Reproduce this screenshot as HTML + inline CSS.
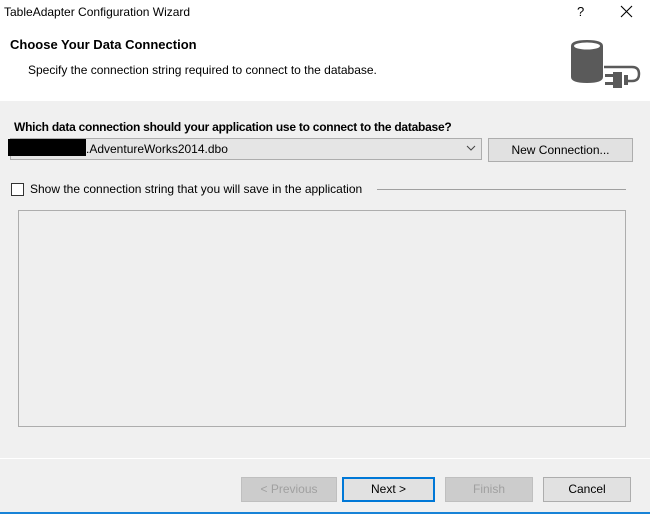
<!DOCTYPE html>
<html><head><style>
*{margin:0;padding:0;box-sizing:border-box}
body{width:650px;height:514px;background:#f0f0f0;font-family:"Liberation Sans",sans-serif;font-size:12px;color:#000;position:relative;overflow:hidden}
.a{position:absolute;white-space:nowrap}
.btn{position:absolute;border:1px solid #adadad;background:#e1e1e1;text-align:center;line-height:23px;font-size:12px}
.dis{color:#a0a0a0;background:#cccccc;border-color:#bfbfbf}
</style></head><body>
<div class="a" style="left:0;top:0;width:650px;height:101px;background:#fff"></div>
<div class="a" style="left:4px;top:5px;font-size:12px">TableAdapter Configuration Wizard</div>
<div class="a" style="left:577px;top:4px;font-size:13px">?</div>
<svg class="a" style="left:620px;top:5px" width="13" height="13"><path d="M1 1L12 12M12 1L1 12" stroke="#000" stroke-width="1.1"/></svg>
<div class="a" style="left:10px;top:37px;font-size:13px;font-weight:bold">Choose Your Data Connection</div>
<div class="a" style="left:28px;top:63px">Specify the connection string required to connect to the database.</div>
<svg class="a" style="left:568px;top:38px" width="80" height="54">
<path d="M3 8Q3 2 19 2Q35 2 35 8V39Q35 45 19 45Q3 45 3 39Z" fill="#5a5a5a"/>
<ellipse cx="19" cy="8" rx="13" ry="3.5" fill="#fff"/>
<path d="M36 29H64Q71 29 71 36Q71 43 64 43H60" fill="none" stroke="#5a5a5a" stroke-width="2.5"/>
<rect x="45" y="34" width="9" height="16" fill="#5a5a5a"/>
<rect x="37" y="36" width="8" height="3" fill="#5a5a5a"/><rect x="37" y="44" width="8" height="3" fill="#5a5a5a"/>
<rect x="56" y="37" width="4" height="10" fill="#5a5a5a"/>
</svg>
<div class="a" style="left:14px;top:120px;font-weight:bold;letter-spacing:-0.25px">Which data connection should your application use to connect to the database?</div>
<div class="a" style="left:10px;top:138px;width:472px;height:22px;border:1px solid #adadad;background:#e5e5e5"></div>
<div class="a" style="left:8px;top:139px;width:78px;height:17px;background:#000"></div>
<div class="a" style="left:86px;top:142px">.AdventureWorks2014.dbo</div>
<svg class="a" style="left:466px;top:145px" width="10" height="6"><path d="M1 1L5 5L9 1" fill="none" stroke="#444"/></svg>
<div class="btn" style="left:488px;top:138px;width:145px;height:24px">New Connection...</div>
<div class="a" style="left:11px;top:183px;width:13px;height:13px;border:1px solid #333;background:#fff"></div>
<div class="a" style="left:30px;top:182px">Show the connection string that you will save in the application</div>
<div class="a" style="left:377px;top:189px;width:249px;height:1px;background:#a0a0a0"></div>
<div class="a" style="left:18px;top:210px;width:608px;height:217px;border:1px solid #adadad;background:#efefef"></div>
<div class="a" style="left:0;top:458px;width:650px;height:1px;background:#fff"></div>
<div class="btn dis" style="left:241px;top:477px;width:96px;height:25px">&lt; Previous</div>
<div class="btn" style="left:342px;top:477px;width:93px;height:25px;border:2px solid #0078d7;line-height:21px">Next &gt;</div>
<div class="btn dis" style="left:445px;top:477px;width:88px;height:25px">Finish</div>
<div class="btn" style="left:543px;top:477px;width:88px;height:25px">Cancel</div>
<div class="a" style="left:0;top:512px;width:650px;height:2px;background:#1883d7"></div>
</body></html>
